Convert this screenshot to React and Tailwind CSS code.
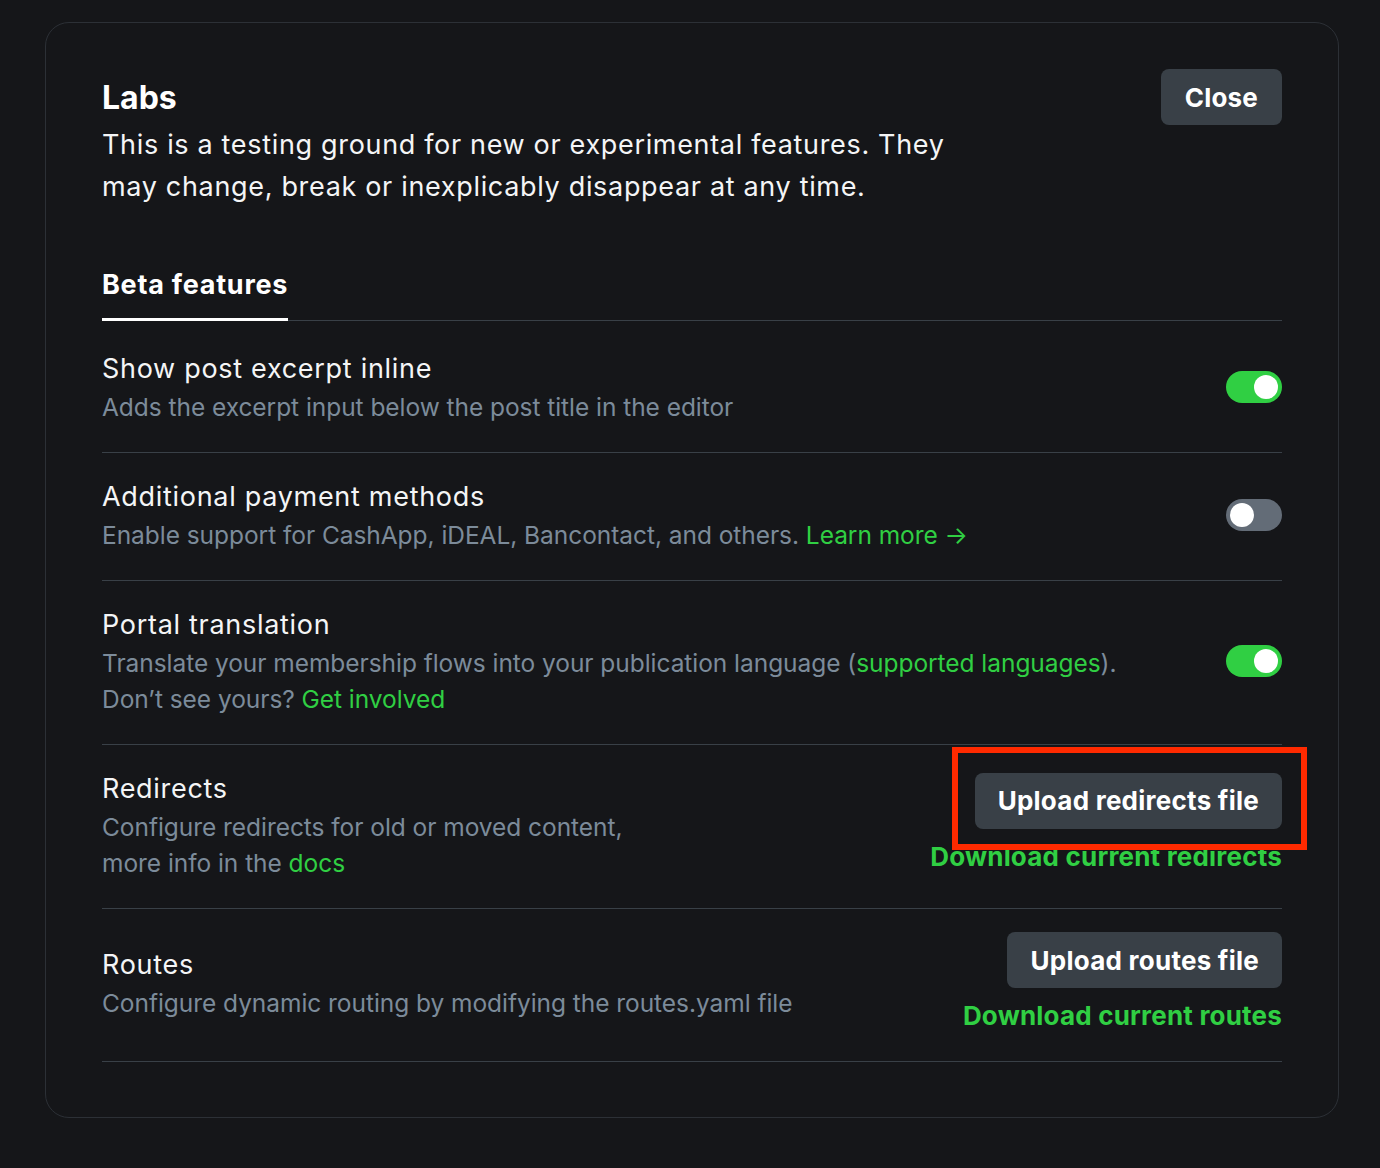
import React, { useState } from 'react'

const Toggle = ({ on, onClick }) => (
  <button
    onClick={onClick}
    className={`w-[56px] h-[32px] rounded-full flex items-center px-[4px] shrink-0 ${on ? 'bg-[#30cf43] justify-end' : 'bg-[#636c77] justify-start'}`}
  >
    <span className="block w-[24px] h-[24px] rounded-full bg-white" />
  </button>
)

const Row = ({ title, children, right, className = '' }) => (
  <div className={`flex items-center justify-between gap-8 border-b border-[#394047] ${className}`}>
    <div>
      <div className="text-[27px] leading-[40px] tracking-[0.7px] text-[#f4f5f6]">{title}</div>
      <div className="text-[24.5px] leading-[36px] tracking-[-0.05px] text-[#7c8b9a]">{children}</div>
    </div>
    {right}
  </div>
)

const FileActions = ({ upload, download, className = '' }) => (
  <div className={`flex flex-col items-end gap-[10px] shrink-0 ${className}`}>
    <button className="h-[56px] px-[23px] rounded-[8px] bg-[#394047] text-white text-[26px] tracking-[0.25px] font-bold">
      {upload}
    </button>
    <a className="text-[26px] leading-[36px] tracking-[0.2px] font-bold text-[#30cf43]">{download}</a>
  </div>
)

export default function App() {
  const [excerpt, setExcerpt] = useState(true)
  const [payments, setPayments] = useState(false)
  const [portal, setPortal] = useState(true)

  return (
    <div
      className="relative min-h-screen bg-[#151619] pt-[22px] pl-[45px] pb-[51px]"
      style={{ fontFamily: 'Inter, "Noto Sans", sans-serif' }}
    >
      <div className="w-[1294px] rounded-[24px] border border-[#2c3036] px-[56px] pt-[46px] pb-[55px]">
        {/* Header */}
        <div className="flex items-start justify-between">
          <div className="mt-[9px]">
            <h1 className="text-[32px] leading-[40px] font-bold text-white">Labs</h1>
            <p className="mt-[6px] max-w-[880px] text-[27px] leading-[42px] tracking-[0.67px] text-[#f4f5f6]">
              This is a testing ground for new or experimental features. They may change, break or inexplicably disappear at any time.
            </p>
          </div>
          <button className="h-[56px] px-[24px] rounded-[8px] bg-[#394047] text-white text-[26px] tracking-[0.2px] font-bold">
            Close
          </button>
        </div>

        {/* Tabs */}
        <div className="mt-[59px] flex border-b border-[#394047]">
          <div className="-mb-px pb-[15px] border-b-[3px] border-white text-[27px] leading-[36px] tracking-[0.75px] font-bold text-white">
            Beta features
          </div>
        </div>

        <Row title="Show post excerpt inline" className="pt-[28px] pb-[27px]"
          right={<Toggle on={excerpt} onClick={() => setExcerpt(!excerpt)} />}>
          Adds the excerpt input below the post title in the editor
        </Row>

        <Row title="Additional payment methods" className="pt-[24px] pb-[27px]"
          right={<Toggle on={payments} onClick={() => setPayments(!payments)} />}>
          Enable support for CashApp, iDEAL, Bancontact, and others. <a className="text-[#30cf43]">Learn more →</a>
        </Row>

        <Row title="Portal translation" className="pt-[24px] pb-[27px]"
          right={<Toggle on={portal} onClick={() => setPortal(!portal)} />}>
          Translate your membership flows into your publication language (<a className="text-[#30cf43]">supported languages</a>).
          <br />
          Don’t see yours? <a className="text-[#30cf43]">Get involved</a>
        </Row>

        <Row title="Redirects" className="pt-[24px] pb-[27px]"
          right={<FileActions className="mb-[3px]" upload="Upload redirects file" download="Download current redirects" />}>
          Configure redirects for old or moved content,
          <br />
          more info in the <a className="text-[#30cf43]">docs</a>
        </Row>

        <Row title="Routes" className="pt-[23px] pb-[27px]"
          right={<FileActions upload="Upload routes file" download="Download current routes" />}>
          Configure dynamic routing by modifying the routes.yaml file
        </Row>
      </div>

      {/* highlight box */}
      <div className="absolute left-[952px] top-[747px] w-[355px] h-[103px] border-[6px] border-[#ff2a00] pointer-events-none" />
    </div>
  )
}
